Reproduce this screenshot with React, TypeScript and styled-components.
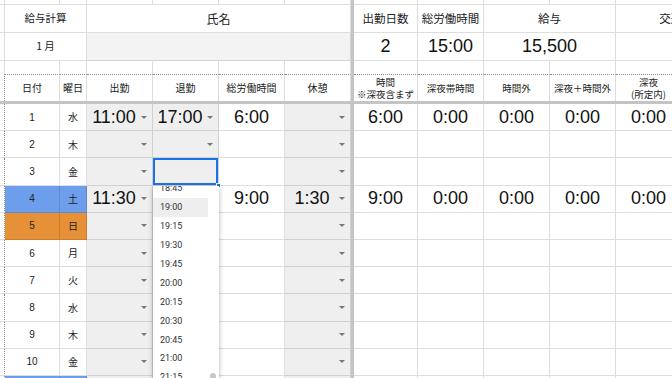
import React from 'react';
import styled, { createGlobalStyle, css } from 'styled-components';

const GRID = 'rgba(0, 0, 0, 0.13)';
const COLS = '5px 55px 27px 66px 66px 66px 66px 3px 64px 66px 66px 66px 66px 56px';
const JP = `'Noto Sans CJK JP', 'Liberation Sans', sans-serif`;
const NUM = `'Liberation Sans', 'Noto Sans CJK JP', sans-serif`;

const GlobalStyle = createGlobalStyle`
  html, body {
    margin: 0;
    padding: 0;
    background: #fff;
  }
  body {
    font-family: ${NUM};
    color: #222;
  }
`;

const Sheet = styled.div`
  position: relative;
  width: 672px;
  height: 378px;
  overflow: hidden;
  background: #fff;
`;

const Row = styled.div<{ $h: number }>`
  display: grid;
  grid-template-columns: ${COLS};
  height: ${(p) => p.$h}px;
`;

const FreezeRow = styled.div`
  height: 3px;
  background: #c4c4c4;
`;

const Freeze = styled.div`
  background: #c4c4c4;
`;

const Cell = styled.div<{
  $span?: number;
  $bg?: string;
  $dotTop?: boolean;
  $dotRight?: boolean;
  $noBottom?: boolean;
}>`
  grid-column: span ${(p) => p.$span ?? 1};
  position: relative;
  box-sizing: border-box;
  display: flex;
  align-items: center;
  justify-content: center;
  min-width: 0;
  overflow: hidden;
  white-space: nowrap;
  text-align: center;
  background: ${(p) => p.$bg ?? '#fff'};
  border-right: 1px ${(p) => (p.$dotRight ? 'dotted #8e8e8e' : `solid ${GRID}`)};
  border-bottom: ${(p) => (p.$noBottom ? 'none' : `1px solid ${GRID}`)};
  ${(p) =>
    p.$dotTop &&
    css`
      border-top: 1px dotted #8e8e8e;
    `}
`;

const SelectCell = styled(Cell)<{ $active?: boolean }>`
  background: #efefef;
  justify-content: flex-start;
  padding-right: 5px;
  ${(p) =>
    p.$active &&
    css`
      box-shadow: inset 0 0 0 2px #1a73e8;
      overflow: visible;
      z-index: 2;
    `}
`;

const Label = styled.span<{ $size?: number }>`
  font-family: ${JP};
  font-size: ${(p) => p.$size ?? 10}px;
  line-height: 1.15;
  color: #222;
`;

const HeadLabel = styled.span`
  display: flex;
  flex-direction: column;
  align-items: center;
  font-family: ${JP};
  font-size: 9.5px;
  line-height: 12px;
  color: #222;
`;

const Small = styled.span`
  font-family: ${NUM};
  font-size: 10px;
  color: #222;
`;

const Big = styled.span`
  font-family: ${NUM};
  font-size: 18px;
  color: #111;
`;

const Slot = styled.span`
  flex: 1;
  display: flex;
  justify-content: center;
  align-items: center;
`;

const Caret = styled.span`
  width: 0;
  height: 0;
  border-left: 3px solid transparent;
  border-right: 3px solid transparent;
  border-top: 3px solid #777;
`;

const Handle = styled.span`
  position: absolute;
  right: -3px;
  bottom: -3px;
  width: 5px;
  height: 5px;
  background: #1a73e8;
  border: 1px solid #fff;
  box-sizing: border-box;
`;

const Menu = styled.div`
  position: absolute;
  left: 153px;
  top: 186px;
  width: 66px;
  height: 210px;
  background: #fff;
  box-shadow: 0 2px 5px rgba(0, 0, 0, 0.3);
  overflow: hidden;
  z-index: 3;
`;

const MenuList = styled.div`
  margin-top: -7px;
  display: flex;
  flex-direction: column;
`;

const MenuItem = styled.div<{ $hover?: boolean }>`
  height: 18.9px;
  margin-right: 11px;
  padding-left: 7px;
  display: flex;
  align-items: center;
  font-family: 'Roboto', ${NUM};
  font-size: 9px;
  color: #333;
  background: ${(p) => (p.$hover ? '#eeeeee' : 'transparent')};
`;

const Thumb = styled.div`
  position: absolute;
  right: 3px;
  top: 187px;
  width: 6px;
  height: 30px;
  border-radius: 3px;
  background: #c8c8c8;
`;

type Day = {
  d: number;
  w: string;
  tone?: 'sat' | 'sun';
  inT?: string;
  outT?: string;
  total?: string;
  rest?: string;
  calc?: string[];
};

const days: Day[] = [
  { d: 1, w: '水', inT: '11:00', outT: '17:00', total: '6:00', calc: ['6:00', '0:00', '0:00', '0:00', '0:00'] },
  { d: 2, w: '木' },
  { d: 3, w: '金' },
  { d: 4, w: '土', tone: 'sat', inT: '11:30', total: '9:00', rest: '1:30', calc: ['9:00', '0:00', '0:00', '0:00', '0:00'] },
  { d: 5, w: '日', tone: 'sun' },
  { d: 6, w: '月' },
  { d: 7, w: '火' },
  { d: 8, w: '水' },
  { d: 9, w: '木' },
  { d: 10, w: '金' },
];

const toneBg = (t?: Day['tone']) => (t === 'sat' ? '#6d9eeb' : t === 'sun' ? '#e69138' : '#fff');

const times = ['18:45', '19:00', '19:15', '19:30', '19:45', '20:00', '20:15', '20:30', '20:45', '21:00', '21:15', '21:30'];

function Select({ value, active }: { value?: string; active?: boolean }) {
  return (
    <SelectCell $active={active}>
      <Slot>{value && <Big>{value}</Big>}</Slot>
      {active ? <Handle /> : <Caret />}
    </SelectCell>
  );
}

function PlainRow({ h, noBottom }: { h: number; noBottom?: boolean }) {
  return (
    <Row $h={h}>
      {Array.from({ length: 7 }).map((_, i) => (
        <Cell key={i} $noBottom={noBottom} />
      ))}
      <Freeze />
      {Array.from({ length: 6 }).map((_, i) => (
        <Cell key={`r${i}`} $noBottom={noBottom} />
      ))}
    </Row>
  );
}

// the row after the 10th is only a sliver at the bottom edge
function TailRow() {
  return (
    <Row $h={27.2}>
      <Cell $dotRight />
      <Cell $bg={toneBg('sat')} />
      <Cell $bg={toneBg('sat')} />
      <SelectCell />
      <SelectCell />
      <Cell />
      <SelectCell />
      <Freeze />
      {Array.from({ length: 6 }).map((_, i) => (
        <Cell key={i} />
      ))}
    </Row>
  );
}

const headLeft = ['日付', '曜日', '出勤', '退勤', '総労働時間', '休憩'];
const headRight: string[][] = [['時間', '※深夜含まず'], ['深夜帯時間'], ['時間外'], ['深夜＋時間外'], ['深夜', '(所定内)'], []];

export default function App() {
  return (
    <>
      <GlobalStyle />
      <Sheet>
        <PlainRow h={5} />

        <Row $h={28}>
          <Cell />
          <Cell $span={2}>
            <Label $size={10.5}>給与計算</Label>
          </Cell>
          <Cell $span={4}>
            <Label $size={12}>氏名</Label>
          </Cell>
          <Freeze />
          <Cell>
            <Label $size={11.5}>出勤日数</Label>
          </Cell>
          <Cell>
            <Label $size={11.5}>総労働時間</Label>
          </Cell>
          <Cell $span={2}>
            <Label $size={11.5}>給与</Label>
          </Cell>
          <Cell $span={2}>
            <Label $size={11.5}>交通費</Label>
          </Cell>
        </Row>

        <Row $h={28}>
          <Cell />
          <Cell $span={2}>
            <Label $size={10.5}>1 月</Label>
          </Cell>
          <Cell $span={4} $bg="#f3f3f3" />
          <Freeze />
          <Cell>
            <Big>2</Big>
          </Cell>
          <Cell>
            <Big>15:00</Big>
          </Cell>
          <Cell $span={2}>
            <Big>15,500</Big>
          </Cell>
          <Cell $span={2} />
        </Row>

        <PlainRow h={13} noBottom />

        <Row $h={27}>
          <Cell $dotRight $noBottom />
          {headLeft.map((t) => (
            <Cell key={t} $dotTop $noBottom>
              <Label>{t}</Label>
            </Cell>
          ))}
          <Freeze />
          {headRight.map((lines, i) => (
            <Cell key={i} $dotTop $noBottom>
              <HeadLabel>
                {lines.map((l) => (
                  <span key={l}>{l}</span>
                ))}
              </HeadLabel>
            </Cell>
          ))}
        </Row>

        <FreezeRow />

        {days.map((day) => (
          <Row key={day.d} $h={27.2}>
            <Cell $dotRight />
            <Cell $bg={toneBg(day.tone)}>
              <Small>{day.d}</Small>
            </Cell>
            <Cell $bg={toneBg(day.tone)}>
              <Label>{day.w}</Label>
            </Cell>
            <Select value={day.inT} />
            <Select value={day.outT} active={day.d === 3} />
            <Cell>{day.total && <Big>{day.total}</Big>}</Cell>
            <Select value={day.rest} />
            <Freeze />
            {Array.from({ length: 5 }).map((_, i) => (
              <Cell key={i}>{day.calc && <Big>{day.calc[i]}</Big>}</Cell>
            ))}
            <Cell />
          </Row>
        ))}
        <TailRow />

        <Menu>
          <MenuList>
            {times.map((t) => (
              <MenuItem key={t} $hover={t === '19:00'}>
                {t}
              </MenuItem>
            ))}
          </MenuList>
          <Thumb />
        </Menu>
      </Sheet>
    </>
  );
}
